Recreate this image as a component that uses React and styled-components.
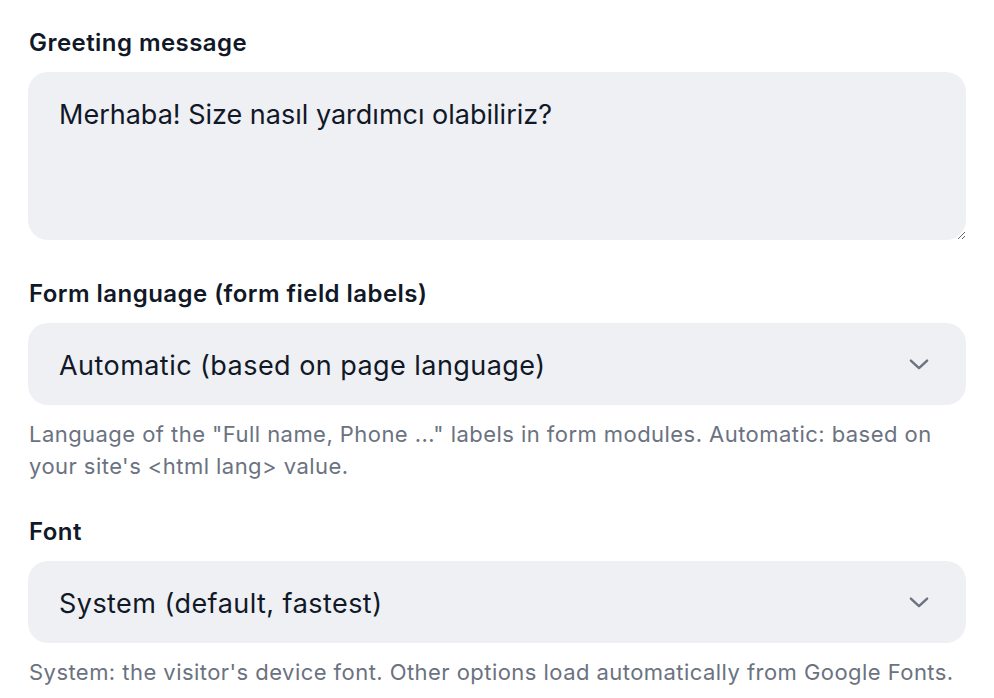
import React from "react";
import styled, { createGlobalStyle } from "styled-components";

const GlobalStyle = createGlobalStyle`
  body {
    margin: 0;
    background: #ffffff;
    font-family: Inter, "Noto Sans", sans-serif;
    color: #111827;
  }
`;

function ChevronDown() {
  return (
    <svg width="26" height="26" viewBox="0 0 24 24" fill="none">
      <path
        d="M4.5 8.8L12 15.8l7.5-7"
        stroke="#6b7280"
        strokeWidth="2.2"
        strokeLinecap="round"
        strokeLinejoin="round"
      />
    </svg>
  );
}

function SelectField({ value }) {
  return (
    <SelectBox>
      <Value>{value}</Value>
      <ChevronDown />
    </SelectBox>
  );
}

export default function App() {
  return (
    <>
      <GlobalStyle />
      <Form>
        <Field>
          <Label>Greeting message</Label>
          <TextArea defaultValue="Merhaba! Size nasıl yardımcı olabiliriz?" />
        </Field>

        <Field>
          <Label>Form language (form field labels)</Label>
          <SelectField value="Automatic (based on page language)" />
          <Help>
            Language of the "Full name, Phone ..." labels in form modules.
            Automatic: based on your site's &lt;html lang&gt; value.
          </Help>
        </Field>

        <Field>
          <Label>Font</Label>
          <SelectField value="System (default, fastest)" />
          <Help>
            System: the visitor's device font. Other options load automatically
            from Google Fonts.
          </Help>
        </Field>
      </Form>
    </>
  );
}

const Form = styled.div`
  display: flex;
  flex-direction: column;
  gap: 34px;
  padding: 27px 28px 0 28px;
`;

const Field = styled.div`
  display: flex;
  flex-direction: column;
`;

const Label = styled.label`
  font-size: 24px;
  font-weight: 600;
  letter-spacing: 0.45px;
  line-height: 32px;
  color: #111827;
  margin-bottom: 13px;
  padding-left: 1px;
`;

const TextArea = styled.textarea`
  box-sizing: border-box;
  width: 100%;
  height: 168px;
  margin-bottom: 4px;
  border: none;
  outline: none;
  border-radius: 20px;
  background: #eef0f4;
  padding: 23px 31px 21px;
  font-family: inherit;
  font-size: 27px;
  line-height: 40px;
  color: #111827;
  resize: vertical;
`;

const SelectBox = styled.div`
  box-sizing: border-box;
  height: 82px;
  border-radius: 20px;
  background: #eef0f4;
  padding: 0 34px 0 31px;
  display: flex;
  align-items: center;
  justify-content: space-between;
  color: #111827;
`;

const Value = styled.span`
  padding-top: 3px;
  font-size: 27px;
  letter-spacing: 0.45px;
`;

const Help = styled.p`
  margin: 13px 0 0 1px;
  font-size: 22px;
  letter-spacing: 0.45px;
  line-height: 32px;
  color: #6b7280;
`;
